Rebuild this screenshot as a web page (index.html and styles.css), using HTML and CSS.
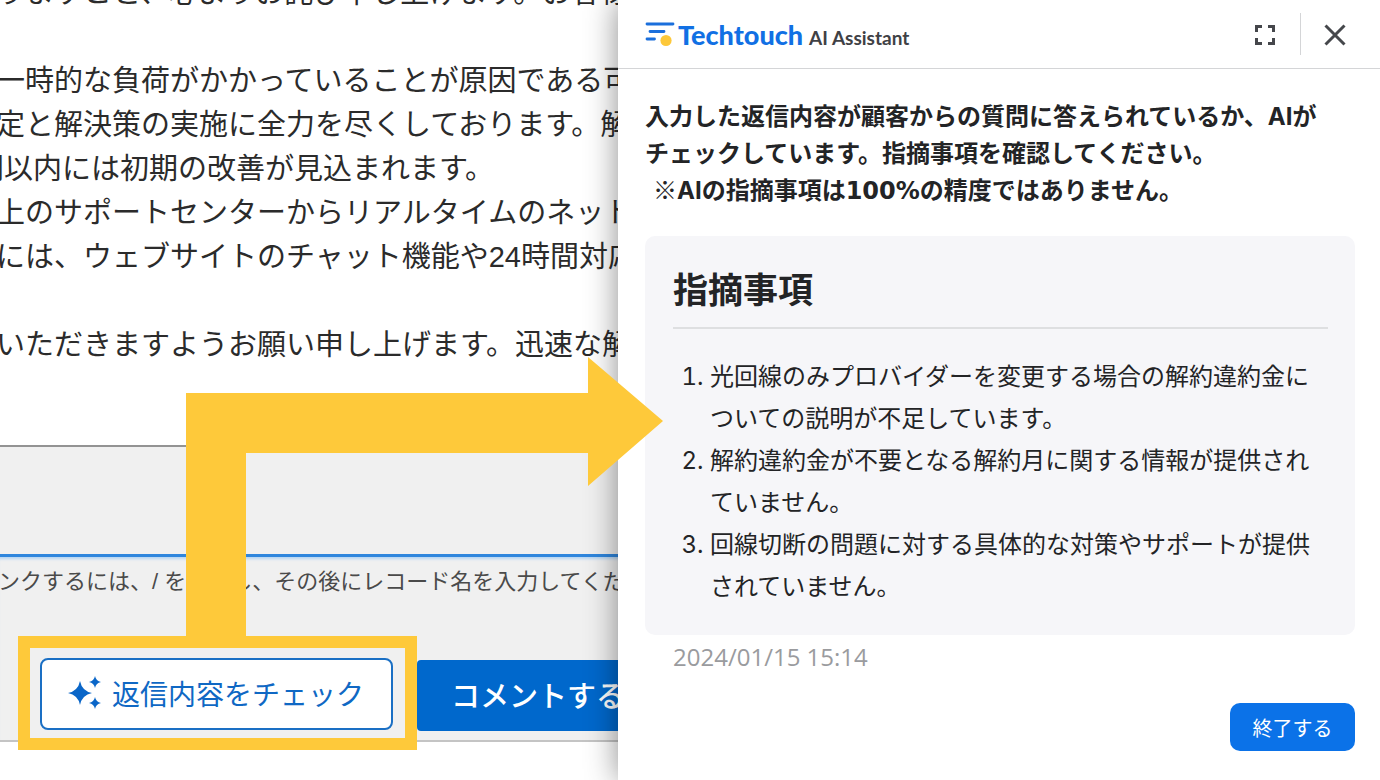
FILE: index.html
```html
<!DOCTYPE html>
<html lang="ja">
<head>
<meta charset="utf-8">
<title>Techtouch AI Assistant</title>
<link rel="stylesheet" href="styles.css">
</head>
<body>
<div class="screen">
  <main class="editor">
    <div class="reply">
      <p>りますこと、心よりお詫び申し上げます。お客様</p>
      <p class="blank"></p>
      <p>一時的な負荷がかかっていることが原因である可</p>
      <p>定と解決策の実施に全力を尽くしております。解</p>
      <p class="outdent">間以内には初期の改善が見込まれます。</p>
      <p>上のサポートセンターからリアルタイムのネット</p>
      <p>には、ウェブサイトのチャット機能や24時間対応</p>
      <p class="blank"></p>
      <p>いただきますようお願い申し上げます。迅速な解</p>
    </div>
    <div class="toolbar"></div>
    <div class="footer">
      <p class="hint">ンクするには、/ を入力し、その後にレコード名を入力してくだ</p>
      <div class="actions">
        <div class="highlight">
          <button class="check" type="button">
            <svg class="sparkle" viewBox="0 0 34 34" aria-hidden="true">
              <path d="M12 5Q14 15 24 17Q14 19 12 29Q10 19 0 17Q10 15 12 5Z"/>
              <path d="M27 0Q28 5 33 6Q28 7 27 12Q26 7 21 6Q26 5 27 0Z"/>
              <path d="M27 21Q28 26 33 27Q28 28 27 33Q26 28 21 27Q26 26 27 21Z"/>
            </svg>
            返信内容をチェック
          </button>
        </div>
        <button class="comment" type="button">コメントする</button>
      </div>
    </div>
  </main>

  <aside class="panel">
    <header class="bar">
      <div class="brand">
        <svg class="mark" viewBox="0 0 30 26" aria-hidden="true">
          <path d="M2 3H28M5 10.500H19M2 18H9.500" fill="none" stroke="#1b6fdc" stroke-width="2.800" stroke-linecap="round"/>
          <circle cx="21" cy="19.500" r="5.600" fill="#fdc83a"/>
        </svg>
        <span class="name">Techtouch</span>
        <span class="product">AI Assistant</span>
      </div>
      <button class="icon expand" type="button" aria-label="全画面">
        <svg viewBox="0 0 22 22"><path d="M2.500 8V2.500H8M14 2.500H19.500V8M19.500 14V19.500H14M8 19.500H2.500V14"/></svg>
      </button>
      <button class="icon close" type="button" aria-label="閉じる">
        <svg viewBox="0 0 22 22"><path d="M1.500 1.500L20.500 20.500M20.500 1.500L1.500 20.500"/></svg>
      </button>
    </header>
    <div class="content">
      <p class="lead">入力した返信内容が顧客からの質問に答えられているか、AIが<br>チェックしています。指摘事項を確認してください。<br><span class="note"><span class="mark-sign">※</span>AIの指摘事項は<span class="percent">100%</span>の精度ではありません。</span></p>
      <section class="card">
        <h2>指摘事項</h2>
        <ol>
          <li>光回線のみプロバイダーを変更する場合の解約違約金についての説明が不足しています。</li>
          <li>解約違約金が不要となる解約月に関する情報が提供されていません。</li>
          <li>回線切断の問題に対する具体的な対策やサポートが提供されていません。</li>
        </ol>
      </section>
      <time class="stamp" datetime="2024-01-15T15:14">2024/01/15 15:14</time>
      <button class="finish" type="button">終了する</button>
    </div>
  </aside>

  <svg class="arrow" viewBox="0 0 477 280" aria-hidden="true">
    <path d="M0 280V36H402V0L477 64L402 129V96H60V280Z" fill="#fec93a"/>
  </svg>
</div>
</body>
</html>
```
FILE: styles.css
```css
* { box-sizing: border-box; }

body {
  margin: 0;
  background: #fff;
  color: #232426;
  font-family: Inter, "Noto Sans CJK JP", sans-serif;
}

p, h2, ol { margin: 0; padding: 0; }

button {
  border: 0;
  padding: 0;
  font-family: inherit;
  cursor: pointer;
}

.screen {
  position: relative;
  display: grid;
  grid-template-columns: minmax(0, 618fr) minmax(0, 762fr);
  min-height: 100vh;
  overflow: hidden;
}

/* Comment editor */
.editor {
  height: 100vh;
  overflow: hidden;
  white-space: nowrap;
  font-family: "Liberation Sans", "Noto Sans CJK JP", sans-serif;
}

.reply {
  margin: -29px 0 0 -4px;
  padding-bottom: 78px;
  font-size: 29px;
  line-height: 44px;
  color: #2b2b2b;
}

.blank { height: 44px; }
.outdent { margin-left: -21px; }

.toolbar {
  height: 112px;
  border-top: 2px solid #939393;
  border-bottom: 3px solid #2f86dd;
  background: #f0f0f0;
}

.footer {
  height: 185px;
  border-bottom: 2px solid #c4c4c4;
  background: #f0f0f0;
  box-shadow: inset 0 4px 3px -2px #b4d4f3;
}

.hint {
  margin-left: -2px;
  padding-top: 9px;
  font-size: 22px;
  line-height: 32px;
  color: #4a4a4a;
}

.actions {
  display: flex;
  align-items: flex-start;
  margin: 38px 0 0 18px;
}

.highlight {
  flex: none;
  padding: 10px 12px 8px 10px;
  border: 12px solid #fec93a;
}

.check {
  display: flex;
  align-items: center;
  gap: 10px;
  width: 353px;
  height: 72px;
  padding: 0 0 2px 26px;
  border: 2px solid #1a6fc4;
  border-radius: 8px;
  background: #fff;
  color: #0f68c4;
  font-size: 28px;
}

.sparkle {
  width: 34px;
  height: 34px;
  fill: #0a66c8;
}

.comment {
  flex: none;
  height: 71px;
  margin-top: 24px;
  padding: 0 34px 4px;
  border-radius: 4px;
  background: #0068cc;
  color: #fff;
  font-size: 29px;
  font-weight: 500;
}

/* Assistant panel */
.panel {
  position: relative;
  display: flex;
  flex-direction: column;
  background: #fff;
  box-shadow: 0 0 30px rgba(0, 0, 0, 0.45);
}

.bar {
  display: flex;
  align-items: center;
  height: 69px;
  padding: 0 34px 0 27px;
  border-bottom: 1px solid #d4d5d7;
}

.brand {
  display: flex;
  align-items: baseline;
  flex: 1;
  font-family: Lato, sans-serif;
}

.mark {
  width: 30px;
  height: 26px;
  align-self: center;
}

.name {
  margin: 0 6px 0 3px;
  color: #1170e4;
  font-size: 27px;
  font-weight: 900;
}

.product {
  color: #3f4145;
  font-size: 19px;
  font-weight: 700;
}

.icon {
  display: flex;
  align-items: center;
  height: 42px;
  padding-top: 2px;
  background: none;
}

.icon svg {
  width: 22px;
  height: 22px;
  fill: none;
  stroke: #45474b;
  stroke-width: 3;
}

.expand { padding-right: 24px; }

.close {
  padding-left: 23px;
  border-left: 1px solid #d4d5d7;
}

.content {
  display: flex;
  flex-direction: column;
  align-items: flex-start;
  padding: 29px 25px 28px 27px;
}

.lead {
  font-size: 24px;
  font-weight: 700;
  line-height: 37px;
  white-space: nowrap;
}

.note { margin-left: 8px; }

.mark-sign {
  font-family: "Noto Sans CJK JP", sans-serif;
  font-weight: 400;
  line-height: 1;
}

.percent {
  font-family: "DejaVu Sans", sans-serif;
  line-height: 1;
}

.card {
  width: 100%;
  margin-top: 27px;
  padding: 28px 27px 27px 28px;
  border-radius: 10px;
  background: #f6f6f9;
}

.card h2 {
  padding-bottom: 11px;
  border-bottom: 2px solid #dedfe1;
  font-size: 35px;
  font-weight: 700;
  line-height: 52px;
}

.card ol {
  margin-top: 27px;
  padding-left: 37px;
  font-size: 24px;
  line-height: 42px;
}

.stamp {
  margin: 6px 0 0 28px;
  color: #9a9b9e;
  font-family: "Open Sans", sans-serif;
  font-size: 24px;
  line-height: 32px;
}

.finish {
  align-self: flex-end;
  width: 125px;
  height: 48px;
  margin-top: 30px;
  border-radius: 10px;
  background: #0b72e8;
  color: #fff;
  font-size: 20px;
}

/* Callout arrow drawn over both panes */
.arrow {
  position: absolute;
  left: 186px;
  top: 357px;
  width: 477px;
  height: 280px;
  pointer-events: none;
}
```
